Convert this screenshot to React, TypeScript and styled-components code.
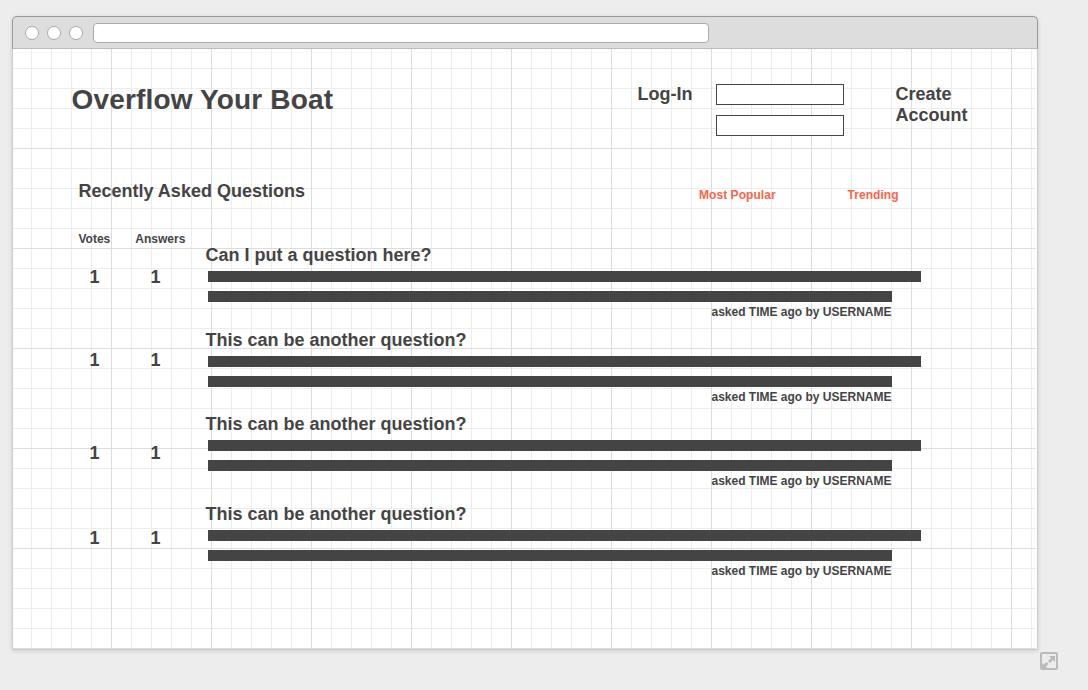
import React from "react";
import styled, { createGlobalStyle } from "styled-components";

const ink = "#444";

const GlobalStyle = createGlobalStyle`
  * { box-sizing: border-box; }
  body {
    margin: 0;
    background: #ededed;
    color: ${ink};
    font-family: "Liberation Sans", Arial, sans-serif;
    font-weight: bold;
  }
  h1, h2, h3, p { margin: 0; font-weight: bold; }
`;

const Page = styled.main`
  display: flex;
  align-items: flex-end;
  gap: 2px;
  width: 1088px;
  height: 690px;
  padding: 16px 0 20px 12px;
  overflow: hidden;
`;

const BrowserWindow = styled.section`
  align-self: flex-start;
  width: 1026px;
  border-radius: 5px 5px 0 0;
  box-shadow: 0 1px 4px rgba(0, 0, 0, 0.15);
`;

const Chrome = styled.header`
  display: flex;
  align-items: center;
  height: 33px;
  padding: 0 0 0 12px;
  background: #ddd;
  border: 1px solid #999;
  border-bottom-color: #bbb;
  border-radius: 5px 5px 0 0;
`;

const WindowButton = styled.span`
  width: 14px;
  height: 14px;
  margin-right: 8px;
  border: 1px solid #aaa;
  border-radius: 50%;
  background: #fff;
`;

const AddressBar = styled.div`
  width: 616px;
  height: 20px;
  margin-left: 2px;
  border: 1px solid #aaa;
  border-radius: 4px;
  background: #fff;
`;

const gridLines = (direction: string, size: number, color: string) =>
  `linear-gradient(${direction}, transparent ${size - 1}px, ${color} ${size - 1}px)`;

const Canvas = styled.div`
  height: 601px;
  padding: 35px 0 0 58px;
  border: 1px solid #ccc;
  border-top: 0;
  background-color: #fff;
  background-image: linear-gradient(to left, #fff 1px, transparent 1px),
    ${gridLines("to right", 100, "#ddd")}, ${gridLines("to bottom", 100, "#ddd")},
    ${gridLines("to right", 20, "#ededed")}, ${gridLines("to bottom", 20, "#ededed")};
  background-size: 100% 100%, 100px 100px, 100px 100px, 20px 20px, 20px 20px;
  background-position: 0 0, -1px 0, -1px 0, -1px 0, -1px 0;
`;

const SiteHeader = styled.div`
  display: flex;
  align-items: flex-start;
  height: 97px;
  padding-left: 0.5px;
`;

const SiteTitle = styled.h1`
  width: 566px;
  font-size: 28px;
  line-height: 31px;
  letter-spacing: 0.16px;
`;

const HeaderLabel = styled.div<{ $width: number }>`
  width: ${(p) => p.$width}px;
  font-size: 18px;
  line-height: 21px;
`;

const LoginFields = styled.div`
  display: flex;
  flex-direction: column;
  gap: 10px;
  width: 179.5px;
`;

const Field = styled.div`
  width: 128px;
  height: 21px;
  border: 1px solid ${ink};
  background: #fff;
`;

const SectionBar = styled.div`
  display: flex;
  align-items: flex-start;
  height: 51px;
  padding-left: 7.5px;
`;

const SectionTitle = styled.h2`
  width: 620.5px;
  font-size: 18px;
  line-height: 20px;
`;

const FilterLink = styled.a`
  width: 148.5px;
  margin-top: 7px;
  color: #ff6347;
  font-size: 12px;
  line-height: 14px;
  letter-spacing: 0.05px;
`;

const ColumnLabels = styled.div`
  display: flex;
  gap: 25px;
  height: 13px;
  padding-left: 7.5px;
  font-size: 12px;
  line-height: 14px;
`;

const QuestionRow = styled.article<{ $height: number }>`
  display: flex;
  align-items: flex-start;
  height: ${(p) => p.$height}px;
  padding-left: 18px;
`;

const Counts = styled.div<{ $drop: number }>`
  display: flex;
  gap: 51px;
  width: 116px;
  padding: ${(p) => p.$drop}px 0 0 0.5px;
  font-size: 18px;
  line-height: 20px;
`;

const Question = styled.div`
  width: 716px;
`;

const QuestionTitle = styled.h3`
  margin: 0 0 6px 0.5px;
  font-size: 18px;
  line-height: 20px;
`;

const TextBar = styled.div<{ $width: number }>`
  width: ${(p) => p.$width}px;
  height: 11px;
  margin: 0 0 9px 3px;
  background: ${ink};

  &:nth-last-child(2) {
    margin-bottom: 3px;
  }
`;

const Byline = styled.p`
  width: 686.5px;
  font-size: 12px;
  line-height: 14px;
  text-align: right;
`;

const ResizeIcon = styled.svg`
  display: block;
  width: 18px;
  height: 18px;
`;

const questions = [
  { title: "Can I put a question here?", height: 85, drop: 22 },
  { title: "This can be another question?", height: 84, drop: 20 },
  { title: "This can be another question?", height: 90, drop: 29 },
  { title: "This can be another question?", height: 84, drop: 24 },
];

export default function App() {
  return (
    <Page>
      <GlobalStyle />
      <BrowserWindow>
        <Chrome>
          <WindowButton />
          <WindowButton />
          <WindowButton />
          <AddressBar />
        </Chrome>
        <Canvas>
          <SiteHeader>
            <SiteTitle>Overflow Your Boat</SiteTitle>
            <HeaderLabel $width={78.5}>Log-In</HeaderLabel>
            <LoginFields>
              <Field />
              <Field />
            </LoginFields>
            <HeaderLabel $width={100}>Create Account</HeaderLabel>
          </SiteHeader>
          <SectionBar>
            <SectionTitle>Recently Asked Questions</SectionTitle>
            <FilterLink>Most Popular</FilterLink>
            <FilterLink>Trending</FilterLink>
          </SectionBar>
          <ColumnLabels>
            <span>Votes</span>
            <span>Answers</span>
          </ColumnLabels>
          {questions.map((q, i) => (
            <QuestionRow key={i} $height={q.height}>
              <Counts $drop={q.drop}>
                <span>1</span>
                <span>1</span>
              </Counts>
              <Question>
                <QuestionTitle>{q.title}</QuestionTitle>
                <TextBar $width={713} />
                <TextBar $width={684} />
                <Byline>asked TIME ago by USERNAME</Byline>
              </Question>
            </QuestionRow>
          ))}
        </Canvas>
      </BrowserWindow>
      <ResizeIcon viewBox="0 0 18 18">
        <rect x="1" y="1" width="16" height="16" rx="1" fill="none" stroke="#bbb" strokeWidth="2" />
        <path d="M9 4h6v6l-2-2-3 3-2-2 3-3z" fill="#bbb" />
        <path d="M2 11l2 1.500 2.500-2.500 2 2L6 14.500l1.500 2H2z" fill="#bbb" />
      </ResizeIcon>
    </Page>
  );
}
